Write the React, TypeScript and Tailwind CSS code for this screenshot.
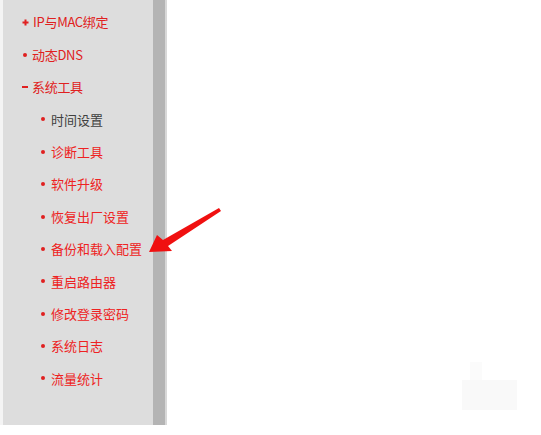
const topItems = [
  { label: "IP与MAC绑定", mark: "plus" },
  { label: "动态DNS", mark: "dot" },
  { label: "系统工具", mark: "minus" },
];

const subItems = [
  { label: "时间设置", active: true },
  { label: "诊断工具" },
  { label: "软件升级" },
  { label: "恢复出厂设置" },
  { label: "备份和载入配置" },
  { label: "重启路由器" },
  { label: "修改登录密码" },
  { label: "系统日志" },
  { label: "流量统计" },
];

const Mark = ({ type }: { type: string }) => {
  if (type === "plus")
    return (
      <svg width="7" height="7" viewBox="0 0 7 7" className="mr-[4px]">
        <path d="M3.5 0.5v6M0.5 3.5h6" stroke="#e02020" strokeWidth="2" />
      </svg>
    );
  if (type === "minus") return <span className="mr-[4px] h-[2px] w-[6px] bg-[#e02020]" />;
  return <span className="mr-[5px] ml-[1px] h-[4px] w-[4px] rounded-full bg-[#e02020]" />;
};

export default function App() {
  return (
    <div
      className="relative flex h-[435px] w-[541px] overflow-hidden bg-white"
      style={{ fontFamily: '"Noto Sans CJK SC", "Liberation Sans", sans-serif' }}
    >
      <div className="flex h-[425px]">
        <div className="w-[3px] bg-[#f4f4f4]" />
        <div className="w-[150px] bg-[#dddddd] pt-[6px]">
          {topItems.map((t) => (
            <div key={t.label} className="flex h-[32.4px] items-center pl-[19px] text-[13px] tracking-[-0.3px] text-[#e02020]">
              <Mark type={t.mark} />
              <span>{t.label}</span>
            </div>
          ))}
          {subItems.map((s) => (
            <div key={s.label} className="flex h-[32.4px] items-center pl-[38px] text-[13px]">
              <span className="mr-[6px] h-[4px] w-[4px] rounded-full bg-[#e02020]" />
              <span className={s.active ? "text-[#404040]" : "text-[#ee2222]"}>{s.label}</span>
            </div>
          ))}
        </div>
        <div className="w-[12px] bg-[#b4b4b4]" />
        <div className="w-[2px] bg-[#d8d8d8]" />
      </div>
      <div className="flex-1" />

      <svg className="absolute left-0 top-0" width="541" height="435" viewBox="0 0 541 435">
        <polygon
          points="149,252 157,235 163,240 219,208 221,211 168,246 172,251"
          fill="#f01010"
        />
      </svg>
      <div className="absolute left-[462px] top-[380px] h-[30px] w-[55px] bg-[#f9f9f9]" />
      <div className="absolute left-[470px] top-[362px] h-[18px] w-[12px] bg-[#fbfbfb]" />
    </div>
  );
}
